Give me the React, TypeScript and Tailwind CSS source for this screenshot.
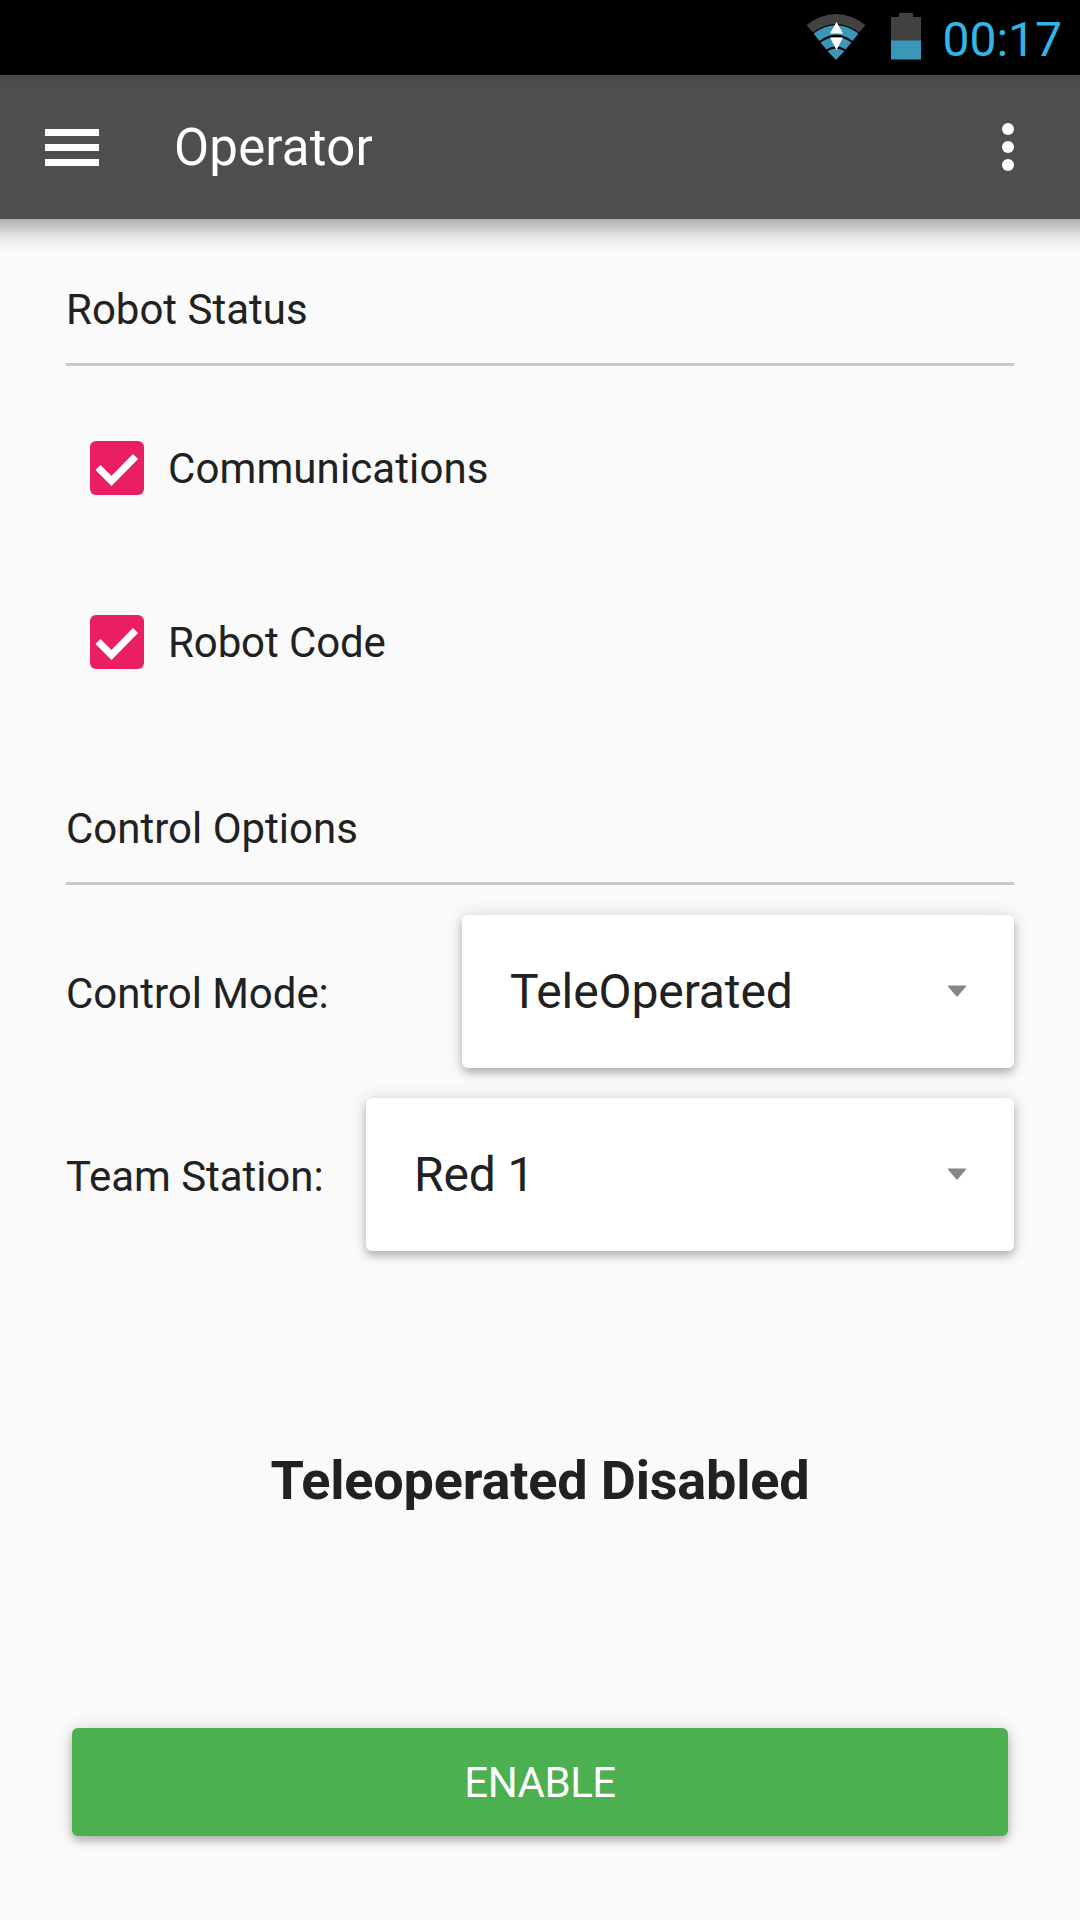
import React from "react";

function WifiIcon() {
  return (
    <svg className="-mt-[2px] h-[46px] w-[60px]" viewBox="0 0 60 46" fill="none">
      <path d="M0.500 11 Q30 -11 59.500 11 L53 18.500 Q30 1.500 7 18.500 Z" fill="#424242" />
      <path d="M7.500 19.500 Q30 3 52.500 19.500 L46.500 27 Q30 14 13.500 27 Z" fill="#3a97ba" />
      <path d="M14.500 28.500 Q30 18 45.500 28.500 L39.500 35.500 Q30 29 20.500 35.500 Z" fill="#3a97ba" />
      <path d="M21.500 37 Q30 32 38.500 37 L30 46 Z" fill="#3a97ba" />
      <path d="M30.500 8 L37 19.500 H24 Z M24 23.500 H37 L30.500 36 Z" fill="#fff" />
    </svg>
  );
}

function BatteryIcon() {
  return (
    <svg className="-mt-[2px] h-[47px] w-[30px]" viewBox="0 0 30 47">
      <path d="M0 4H8V0H22V4H30V28H0Z" fill="#424242" />
      <path d="M0 27.500H30V46.500H0Z" fill="#3a97ba" />
    </svg>
  );
}

function SectionTitle({ children }: { children: React.ReactNode }) {
  return (
    <h2 className="h-[84px] border-b-[3px] border-[#c8c8c8] pt-[3px] text-[42px] leading-[50px]">
      {children}
    </h2>
  );
}

function CheckRow({ label, tracking }: { label: string; tracking: string }) {
  return (
    <div className="flex h-[54px] items-center gap-6 pl-6">
      <svg className="h-[54px] w-[54px] rounded-[6px] bg-[#e91e63]" viewBox="0 0 54 54" fill="none">
        <path d="M8 26.500 L21.500 40 L45.500 15.500" stroke="#fff" strokeWidth="7.200" />
      </svg>
      <span className={`pt-[2px] text-[42px] leading-[48px] ${tracking}`}>{label}</span>
    </div>
  );
}

function SelectRow({ label, value, size }: { label: string; value: string; size: string }) {
  return (
    <div className="flex h-[153px] items-center justify-between">
      <span className="pt-1 text-[42px] leading-[48px] tracking-[-0.05px]">{label}</span>
      <button
        className={`flex h-full items-center justify-between rounded-[6px] bg-white pr-12 pl-12 shadow-[0_5px_9px_rgba(0,0,0,0.24),0_0_18px_rgba(0,0,0,0.13)] ${size}`}
      >
        <span className="text-[48px] leading-[56px] tracking-[-0.1px]">{value}</span>
        <svg className="-mt-px h-[12px] w-[18px]" viewBox="0 0 18 12">
          <path d="M0 0.500H18V1.500L9.500 11.500H8.500L0 1.500Z" fill="#868686" />
        </svg>
      </button>
    </div>
  );
}

export default function App() {
  return (
    <div className="flex h-[1920px] w-[1080px] flex-col bg-[#fafafa] font-['Roboto',sans-serif] text-[#212121]">
      <div className="flex h-[75px] items-center justify-end bg-black pr-[18px]">
        <WifiIcon />
        <div className="w-[25px]" />
        <BatteryIcon />
        <span className="ml-[21px] pt-1 text-[48px] leading-[56px] text-[#33b5e5]">00:17</span>
      </div>
      <header className="flex h-36 items-center bg-linear-to-b from-[#484848] to-[#4e4e4e] to-10% pr-[66px] pl-[45px] text-white">
        <div className="flex w-[54px] flex-col gap-2">
          <div className="h-[7px] bg-white" />
          <div className="h-[7px] bg-white" />
          <div className="h-[7px] bg-white" />
        </div>
        <h1 className="ml-[75px] flex-1 pt-[2px] text-[51px] leading-[60px] tracking-[0.2px]">Operator</h1>
        <div className="flex flex-col gap-[6px]">
          <div className="size-[12px] rounded-full bg-white" />
          <div className="size-[12px] rounded-full bg-white" />
          <div className="size-[12px] rounded-full bg-white" />
        </div>
      </header>
      <div className="-mb-8 h-8 bg-linear-to-b from-[#aeaeae] via-[#e2e2e2] to-[#fafafa]" />
      <main className="flex flex-1 flex-col px-[66px] pt-[63px]">
        <SectionTitle>Robot Status</SectionTitle>
        <div className="mt-[75px] flex flex-col gap-[120px]">
          <CheckRow label="Communications" tracking="tracking-[0.1px]" />
          <CheckRow label="Robot Code" tracking="tracking-[-0.1px]" />
        </div>
        <div className="mt-[132px]">
          <SectionTitle>Control Options</SectionTitle>
        </div>
        <div className="mt-[30px] flex flex-col gap-[30px]">
          <SelectRow label="Control Mode:" value="TeleOperated" size="w-[552px]" />
          <SelectRow label="Team Station:" value="Red 1" size="w-[648px]" />
        </div>
        <p className="mt-[198px] text-center text-[54px] leading-[64px] font-bold tracking-[-0.18px]">Teleoperated Disabled</p>
        <button className="mx-[6px] mt-[215px] h-[108px] rounded-[6px] bg-[#4caf50] text-[42px] tracking-[-0.5px] text-white shadow-[0_5px_9px_rgba(0,0,0,0.24),0_0_18px_rgba(0,0,0,0.13)]">
          ENABLE
        </button>
      </main>
    </div>
  );
}
